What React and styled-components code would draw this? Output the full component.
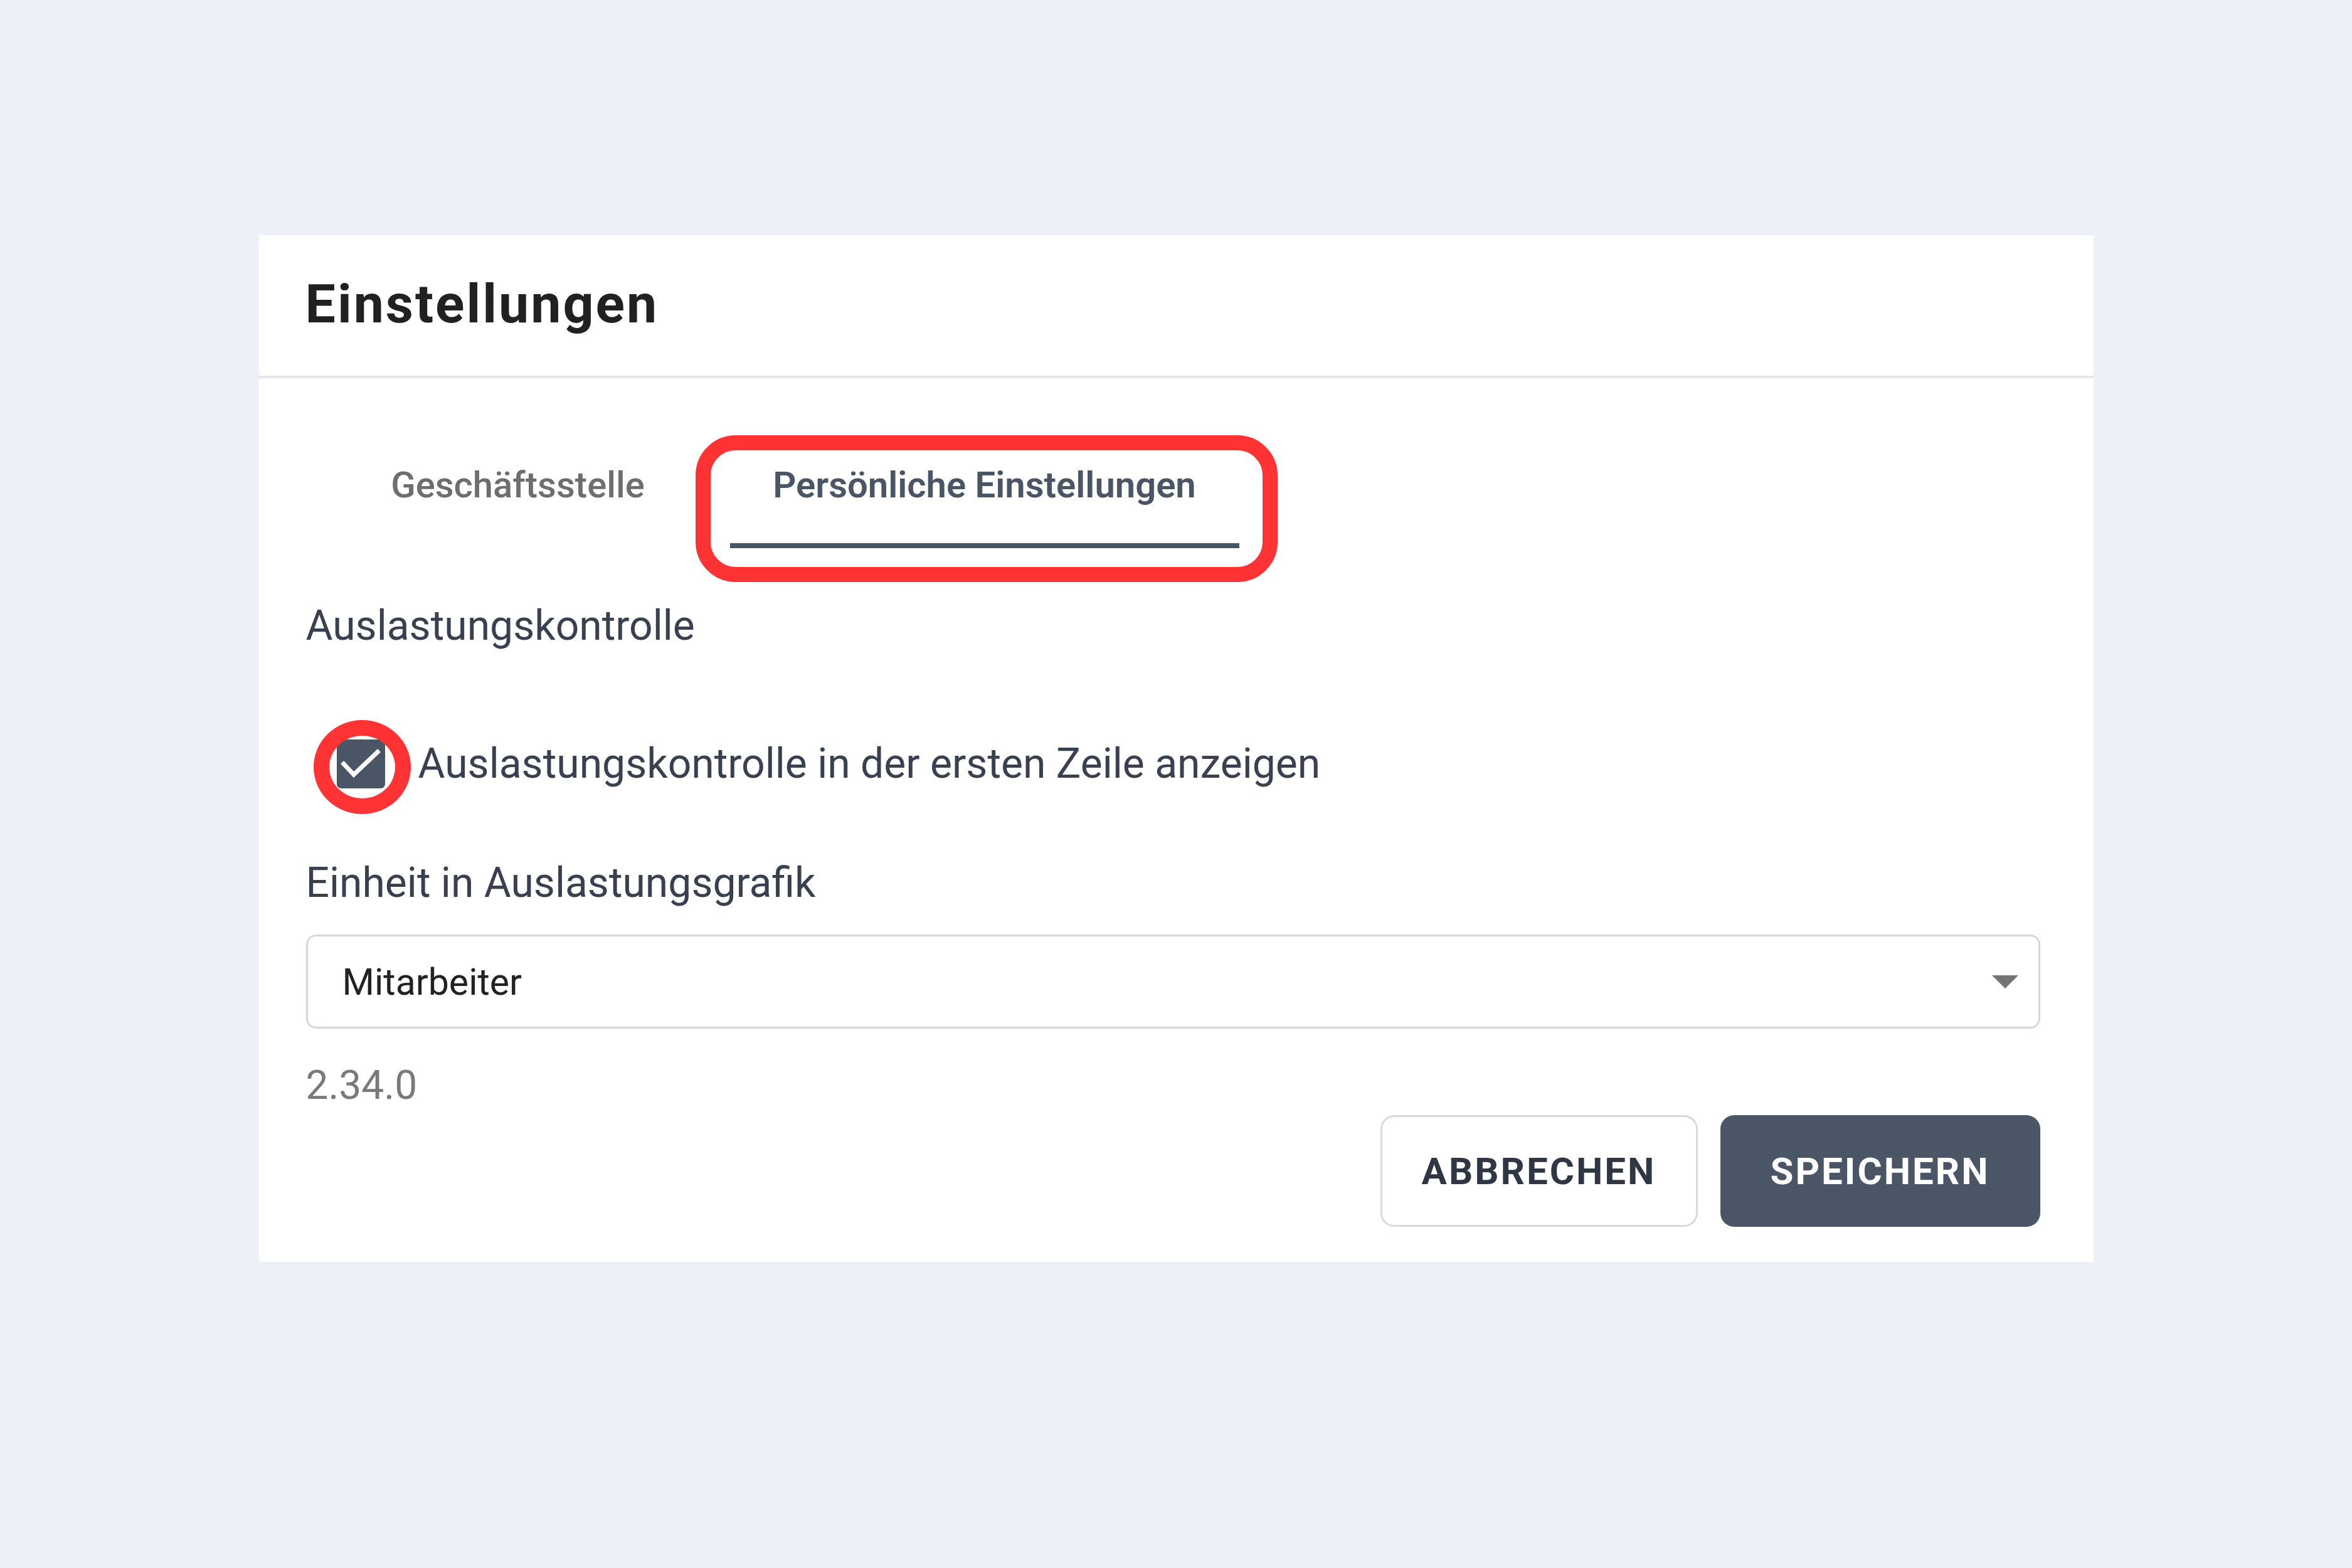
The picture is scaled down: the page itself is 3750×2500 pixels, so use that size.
import React, { useState } from 'react';
import styled, { createGlobalStyle } from 'styled-components';

const GlobalStyle = createGlobalStyle`
    html, body {
        margin: 0;
        padding: 0;
        background: #edf0f7;
        font-family: Roboto, 'Liberation Sans', sans-serif;
    }
`;

const Page = styled.div`
    min-height: 2500px;
    padding-top: 375px;
    box-sizing: border-box;
    display: flex;
    justify-content: center;
    align-items: flex-start;
`;

const Card = styled.div`
    width: 2925px;
    background: #ffffff;
`;

const Header = styled.div`
    padding: 58px 76px 63px 74px;
    border-bottom: 4px solid #e6e7ee;
`;

const Title = styled.h1`
    margin: 0;
    font-size: 86px;
    line-height: 1.2;
    font-weight: 700;
    letter-spacing: 3px;
    color: #212121;
`;

const Body = styled.div`
    padding: 79px 85px 56px 75px;
    display: flex;
    flex-direction: column;
`;

const TabRow = styled.div`
    display: flex;
`;

const Tab = styled.button`
    position: relative;
    width: ${(p) => p.$width}px;
    padding: 57px 0 57px;
    background: none;
    border: none;
    border-bottom: 8px solid ${(p) => (p.$active ? '#4a5565' : 'transparent')};
    font-family: inherit;
    font-size: 58px;
    line-height: 1.2;
    font-weight: ${(p) => (p.$active ? 600 : 500)};
    color: ${(p) => (p.$active ? '#4a5565' : '#6e6e6e')};
    text-align: center;
    box-sizing: content-box;
    cursor: pointer;
`;

const TabRing = styled.span`
    position: absolute;
    left: -55px;
    right: -61px;
    top: 12px;
    bottom: -62px;
    border: 24px solid #ff3333;
    border-radius: 64px;
    pointer-events: none;
`;

const SectionTitle = styled.div`
    margin-top: 84px;
    font-size: 66px;
    line-height: 1.2;
    color: #394150;
`;

const CheckRow = styled.label`
    margin-top: 141px;
    display: flex;
    align-items: center;
    cursor: pointer;
`;

const CheckBox = styled.span`
    position: relative;
    width: 77px;
    height: 78px;
    margin-left: 49px;
    border-radius: 7px;
    background: ${(p) => (p.$checked ? '#4a5565' : '#ffffff')};
    border: ${(p) => (p.$checked ? 'none' : '4px solid #4a5565')};
    box-sizing: border-box;
    flex-shrink: 0;
    display: flex;
    align-items: center;
    justify-content: center;
`;

const CheckRing = styled.span`
    position: absolute;
    left: -37px;
    top: -31px;
    width: 155px;
    height: 150px;
    border: 25px solid #ff3333;
    border-radius: 50%;
    box-sizing: border-box;
    pointer-events: none;
`;

const CheckLabel = styled.span`
    margin-left: 53px;
    font-size: 66px;
    line-height: 1.2;
    color: #394150;
`;

const FieldLabel = styled.div`
    margin-top: 111px;
    font-size: 66px;
    line-height: 1.2;
    color: #394150;
`;

const SelectBox = styled.div`
    margin-top: 43px;
    height: 150px;
    border: 3px solid #d3d8e0;
    border-radius: 16px;
    box-sizing: border-box;
    padding: 0 32px 0 55px;
    display: flex;
    align-items: center;
    justify-content: space-between;
    font-size: 59px;
    color: #222222;
`;

const Version = styled.div`
    margin-top: 53px;
    font-size: 64px;
    line-height: 1.2;
    color: #7a7a7a;
`;

const ButtonRow = styled.div`
    margin-top: 8px;
    display: flex;
    justify-content: flex-end;
    gap: 36px;
`;

const Button = styled.button`
    height: 178px;
    width: ${(p) => p.$width}px;
    border-radius: 22px;
    font-family: inherit;
    font-size: 60px;
    font-weight: 700;
    letter-spacing: 3px;
    cursor: pointer;
    background: ${(p) => (p.$primary ? '#4a5565' : '#ffffff')};
    color: ${(p) => (p.$primary ? '#ffffff' : '#2f3744')};
    border: ${(p) => (p.$primary ? 'none' : '3px solid #d5d9e0')};
`;

function App() {
    const [tab, setTab] = useState(1);
    const [checked, setChecked] = useState(true);

    return (
        <Page>
            <GlobalStyle />
            <Card>
                <Header>
                    <Title>Einstellungen</Title>
                </Header>
                <Body>
                    <TabRow>
                        <Tab $width={676} $active={tab === 0} onClick={() => setTab(0)}>
                            Geschäftsstelle
                        </Tab>
                        <Tab $width={812} $active={tab === 1} onClick={() => setTab(1)}>
                            Persönliche Einstellungen
                            <TabRing />
                        </Tab>
                    </TabRow>

                    <SectionTitle>Auslastungskontrolle</SectionTitle>

                    <CheckRow onClick={() => setChecked(!checked)}>
                        <CheckBox $checked={checked}>
                            {checked && (
                                <svg width="77" height="78" viewBox="0 0 77 78">
                                    <path
                                        d="M11 39 L27 56 L65 20"
                                        fill="none"
                                        stroke="#ffffff"
                                        strokeWidth="7"
                                        strokeLinecap="square"
                                    />
                                </svg>
                            )}
                            <CheckRing />
                        </CheckBox>
                        <CheckLabel>Auslastungskontrolle in der ersten Zeile anzeigen</CheckLabel>
                    </CheckRow>

                    <FieldLabel>Einheit in Auslastungsgrafik</FieldLabel>
                    <SelectBox>
                        <span>Mitarbeiter</span>
                        <svg width="42" height="21" viewBox="0 0 42 21">
                            <path d="M0 0 L42 0 L21 21 Z" fill="#757575" />
                        </svg>
                    </SelectBox>

                    <Version>2.34.0</Version>
                    <ButtonRow>
                        <Button $width={506} type="button">ABBRECHEN</Button>
                        <Button $width={510} $primary type="button">SPEICHERN</Button>
                    </ButtonRow>
                </Body>
            </Card>
        </Page>
    );
}

export default App;
